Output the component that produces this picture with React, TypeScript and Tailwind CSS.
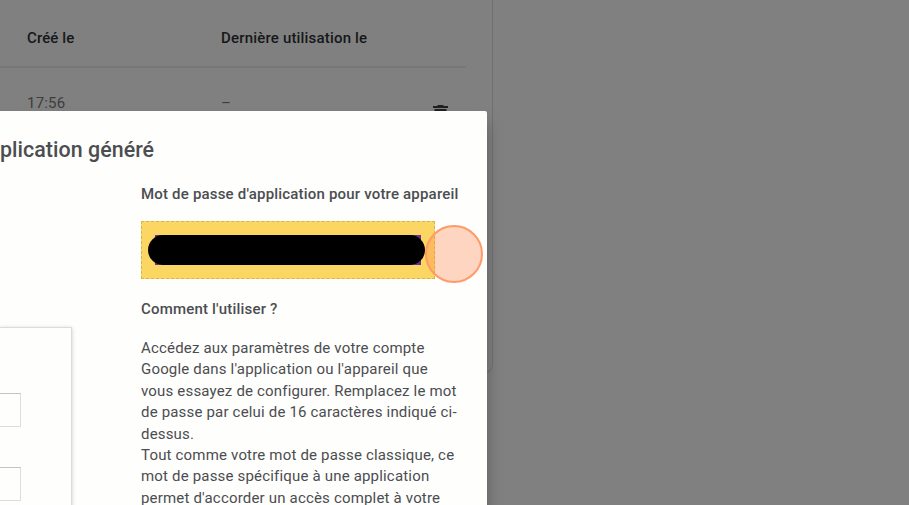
function TrashIcon() {
  return (
    <svg className="block h-[20px] w-[16px]" viewBox="0 0 16 20" fill="#1f2022">
      <path d="M4.5 1V0h6v1H15v2H0V1zM1.5 4h12v13a2 2 0 0 1-2 2h-8a2 2 0 0 1-2-2z" />
    </svg>
  );
}

function PasswordTable() {
  return (
    <section className="h-[373px] w-[493px] rounded-br-[8px] border-r border-b border-[#707070] pr-[26px]">
      <div className="flex h-[68px] items-center border-b-2 border-[#777777] pt-[11px] pl-[27px] text-[15px] font-medium text-[#161718]">
        <span className="w-[194px] tracking-[0.1px]">Créé le</span>
        <span className="tracking-[0.18px]">Dernière utilisation le</span>
      </div>
      <div className="flex pt-[24px] pl-[27px] text-[15px] leading-[22px] text-[#3b3d3f]">
        <span className="w-[194px] tracking-[0.2px]">17:56</span>
        <span className="w-[212px]">–</span>
        <span className="pt-[13px]">
          <TrashIcon />
        </span>
      </div>
    </section>
  );
}

function DeviceCard() {
  return (
    <div className="mt-[164px] h-[300px] w-[72px] shrink-0 border-t border-r border-[#dcdcdc] pt-[65px] shadow-[0_1px_4px_rgba(0,0,0,0.2)]">
      <div className="h-[34px] w-[21px] border border-l-0 border-[#dddddd] border-t-[#c4c4c4]" />
      <div className="mt-[40px] h-[34px] w-[21px] border border-l-0 border-[#dddddd] border-t-[#c4c4c4]" />
    </div>
  );
}

function GeneratedPassword() {
  return (
    <div className="mt-[16px] h-[58px] w-[294px] border border-dashed border-[#d8b451] bg-[#fcd663] pt-[13px] pl-[6px]">
      <div className="relative h-[30px] w-[277px]">
        <div className="absolute inset-y-0 right-[4px] left-[7px] bg-[#68308c]" />
        <div className="absolute inset-0 rounded-full bg-black" />
      </div>
    </div>
  );
}

function PasswordDialog() {
  return (
    <div className="absolute top-[111px] left-0 h-[420px] w-[487px] rounded-tr-[2px] bg-[#fefefd] text-[#4b4d50] shadow-[0_12px_16px_rgba(0,0,0,0.28)]">
      <h1 className="h-[52px] pt-[25px] text-[21.4px] leading-[28px] font-medium tracking-[0.05px] whitespace-nowrap">
        plication généré
      </h1>
      <div className="flex">
        <DeviceCard />
        <div className="w-[345px] shrink-0 pt-[21px] pl-[69px] text-[15px] leading-[21.4px] whitespace-nowrap">
          <h2 className="font-medium tracking-[0.19px]">Mot de passe d'application pour votre appareil</h2>
          <GeneratedPassword />
          <h2 className="mt-[20px] font-medium tracking-[0.19px]">Comment l'utiliser ?</h2>
          <p className="mt-[17.1px] tracking-[0.18px]">
            Accédez aux paramètres de votre compte
            <br />
            Google dans l'application ou l'appareil que
            <br />
            vous essayez de configurer. Remplacez le mot
            <br />
            de passe par celui de 16 caractères indiqué ci-
            <br />
            dessus.
            <br />
            Tout comme votre mot de passe classique, ce
            <br />
            mot de passe spécifique à une application
            <br />
            permet d'accorder un accès complet à votre
          </p>
        </div>
      </div>
    </div>
  );
}

export default function App() {
  return (
    <main className="relative h-[505px] w-[909px] overflow-hidden bg-[#808080] font-[Roboto,sans-serif]">
      <PasswordTable />
      <PasswordDialog />
      <div className="absolute top-[225px] left-[425px] h-[58px] w-[58px] rounded-full border-2 border-[#ff9b68] bg-[#ff8a50]/35" />
    </main>
  );
}
